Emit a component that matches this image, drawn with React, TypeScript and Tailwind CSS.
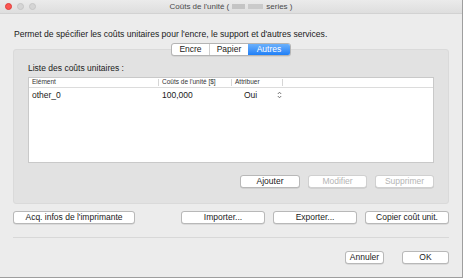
const font = { fontFamily: '"Liberation Sans", Arial, sans-serif' };

function MacButton({ label, w, disabled }: { label: string; w: string; disabled?: boolean }) {
  return (
    <div
      className={`${w} h-[13px] flex items-center justify-center rounded-[3px] bg-white border text-[8.5px] leading-none shadow-[0_0.5px_0.5px_rgba(0,0,0,0.15)] ${
        disabled ? "border-[#d0d0d0] text-[#b4b4b4]" : "border-[#b8b8b8] text-[#1a1a1a]"
      }`}
    >
      {label}
    </div>
  );
}

function Stepper() {
  return (
    <svg width="5" height="8" viewBox="0 0 5 8" fill="none" stroke="#555" strokeWidth="0.8">
      <path d="M0.8 3 L2.5 1.2 L4.2 3" />
      <path d="M0.8 5 L2.5 6.8 L4.2 5" />
    </svg>
  );
}

export default function App() {
  return (
    <div
      style={font}
      className="w-[463px] h-[278px] bg-[#ececec] border-r border-b border-[#9e9e9e] flex flex-col text-[#1a1a1a] overflow-hidden"
    >
      {/* Title bar */}
      <div className="h-[14px] shrink-0 relative flex items-center justify-center bg-gradient-to-b from-[#ebebeb] to-[#dedede] border-b border-[#d2d2d2]">
        <div className="absolute left-[5px] top-[3px] flex gap-[5px]">
          <span className="w-[7px] h-[7px] rounded-full bg-[#fc5753] border border-[#df3e3a]" />
          <span className="w-[7px] h-[7px] rounded-full bg-[#d5d5d5] border border-[#c6c6c6]" />
          <span className="w-[7px] h-[7px] rounded-full bg-[#d5d5d5] border border-[#c6c6c6]" />
        </div>
        <div className="flex items-center text-[8px] text-[#4a4a4a] leading-none">
          <span>Coûts de l'unité (</span>
          <span className="mx-[3px] flex gap-[3px] blur-[0.6px]">
            <span className="w-[13px] h-[5px] bg-[#c4c4c4]" />
            <span className="w-[15px] h-[5px] bg-[#cacaca]" />
          </span>
          <span>series )</span>
        </div>
      </div>

      {/* Body */}
      <div className="flex flex-col px-[13px]">
        <p className="mt-[15px] pl-px text-[8.6px] leading-[10px]">
          Permet de spécifier les coûts unitaires pour l'encre, le support et d'autres services.
        </p>

        {/* Segmented control */}
        <div className="relative z-10 mt-[4px] self-center flex h-[13px] rounded-[3px] border border-[#b4b4b4] bg-white text-[8.5px] leading-none overflow-hidden shadow-[0_0.5px_0.5px_rgba(0,0,0,0.12)]">
          <div className="w-[38px] flex items-center justify-center border-r border-[#cfcfcf]">Encre</div>
          <div className="w-[38px] flex items-center justify-center">Papier</div>
          <div className="w-[42px] flex items-center justify-center text-white bg-gradient-to-b from-[#6ab0fb] to-[#1c7ff7]">
            Autres
          </div>
        </div>

        {/* Group box */}
        <div className="-mt-[7px] h-[155px] rounded-[3px] bg-[#e2e2e2] border border-[#dadada] flex flex-col px-[14px]">
          <p className="mt-[13px] text-[8.5px] leading-[10px]">Liste des coûts unitaires :</p>
          <div className="mt-[4px] h-[86px] bg-white border border-[#c9c9c9] flex flex-col">
            <div className="h-[10px] flex items-center text-[6.5px] text-[#333] border-b border-[#dcdcdc] leading-none">
              <div className="w-[130px] pl-[3px] border-r border-[#d6d6d6] h-[7px] flex items-center">Elément</div>
              <div className="w-[73px] pl-[3px] border-r border-[#d6d6d6] h-[7px] flex items-center">Coûts de l'unité [$]</div>
              <div className="w-[51px] pl-[3px] border-r border-[#d6d6d6] h-[7px] flex items-center">Attribuer</div>
            </div>
            <div className="h-[14px] flex items-center text-[8.5px] leading-none">
              <div className="w-[130px] pl-[3px]">other_0</div>
              <div className="w-[73px] pl-[3px]">100,000</div>
              <div className="w-[51px] pl-[12px] flex items-center gap-[20px]">
                <span>Oui</span>
                <Stepper />
              </div>
            </div>
          </div>
          <div className="mt-[12px] flex justify-end gap-[8px]">
            <MacButton label="Ajouter" w="w-[60px]" />
            <MacButton label="Modifier" w="w-[59px]" disabled />
            <MacButton label="Supprimer" w="w-[59px]" disabled />
          </div>
        </div>

        {/* Secondary buttons */}
        <div className="mt-[7px] flex items-center">
          <MacButton label="Acq. infos de l'imprimante" w="w-[122px]" />
          <div className="ml-auto flex gap-[8px]">
            <MacButton label="Importer..." w="w-[84px]" />
            <MacButton label="Exporter..." w="w-[84px]" />
            <MacButton label="Copier coût unit." w="w-[84px]" />
          </div>
        </div>

        <div className="mt-[13px] h-px bg-[#d8d8d8]" />

        <div className="mt-[13px] flex justify-end gap-[18px]">
          <MacButton label="Annuler" w="w-[39px]" />
          <MacButton label="OK" w="w-[47px]" />
        </div>
      </div>
    </div>
  );
}
